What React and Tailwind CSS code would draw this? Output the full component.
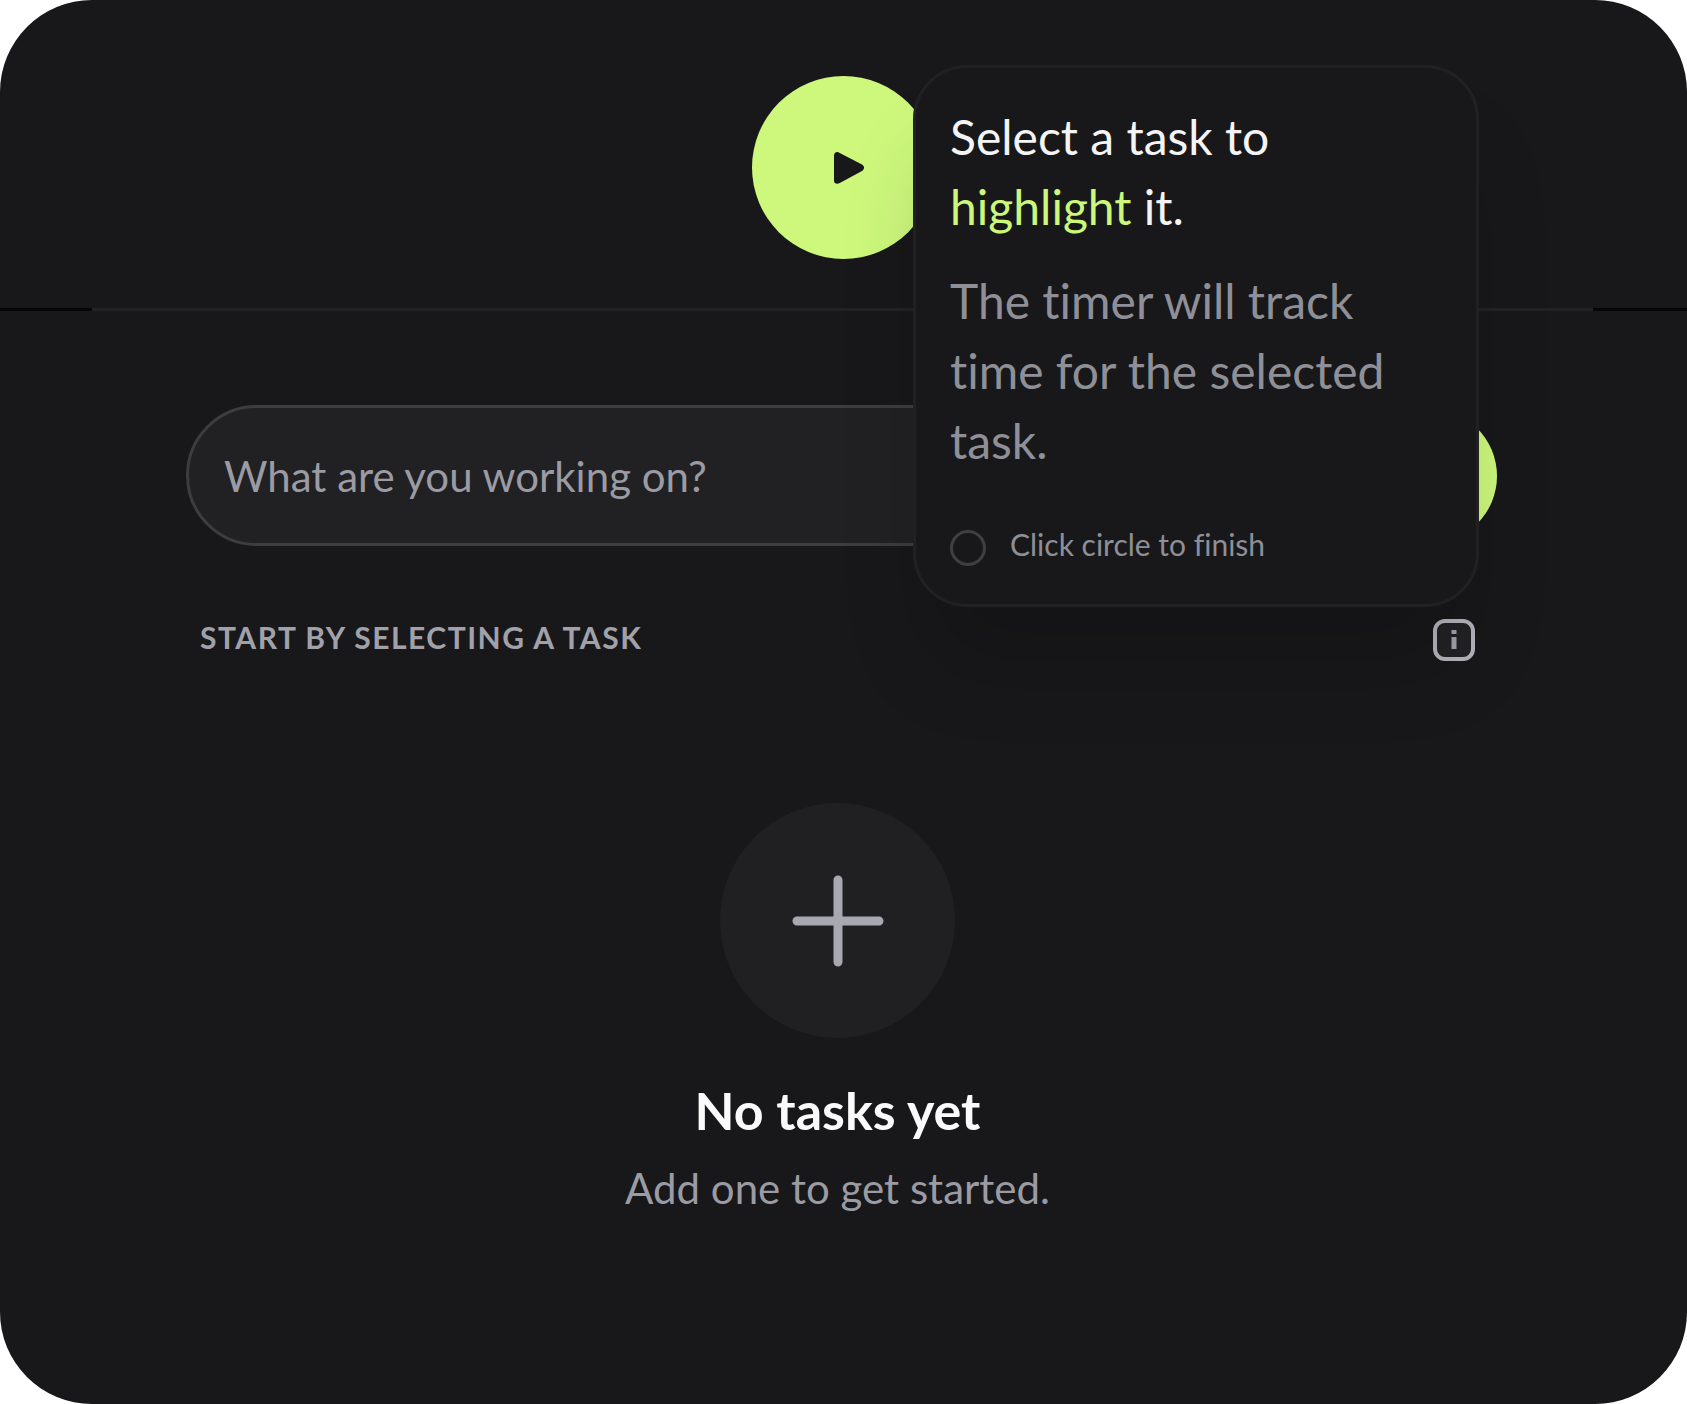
import React from 'react';

const PlayIcon = () => (
  <svg width="32" height="34" viewBox="0 0 32 34" fill="currentColor" aria-hidden="true">
    <path d="M1 4.5C1 1.8 3.4.3 5.8 1.4L29 13.6c2.7 1.5 2.7 4.9 0 6.4L6.8 32C3.6 33.6 1 32.4 1 29.4z" />
  </svg>
);

const PlusIcon = ({ size, stroke }) => (
  <svg
    width={size}
    height={size}
    viewBox="0 0 92 92"
    fill="none"
    stroke="currentColor"
    strokeWidth={stroke}
    strokeLinecap="round"
    aria-hidden="true"
  >
    <path d="M46 5v82M5 46h82" />
  </svg>
);

const InfoIcon = () => (
  <svg width="42" height="42" viewBox="0 0 42 42" fill="none" aria-hidden="true">
    <rect x="2" y="2" width="38" height="38" rx="10" fill="#222224" stroke="#b4b4bb" strokeWidth="4" />
    <path d="M21 11v4M21 18v12" stroke="#a1a1aa" strokeWidth="5" />
  </svg>
);

const TaskHint = () => (
  <div
    role="tooltip"
    className="absolute -right-1 bottom-full mb-3 w-[566px] rounded-[54px] border-3 border-[#212123] bg-[#18181a] pt-[34px] pr-16 pb-[38px] pl-[34px] text-left text-[48px] leading-[70px] shadow-[0_70px_88px_-18px_rgba(0,0,0,0.18)]"
  >
    <p className="text-[#f4f4f5]">
      Select a task to <span className="text-[#cbf77b]">highlight</span> it.
    </p>
    <p className="mt-6 text-[#8f8f98]">The timer will track time for the selected task.</p>
    <label className="mt-[54px] flex items-start gap-6 text-[30px] leading-7 text-[#8f8f98]">
      <input type="checkbox" className="size-9 appearance-none rounded-full border-3 border-[#3f3f42]" />
      Click circle to finish
    </label>
  </div>
);

const EmptyState = () => (
  <div className="mt-[142px] flex flex-col items-center">
    <div className="flex size-[235px] items-center justify-center rounded-full bg-[#202022] text-[#a8a8b1]">
      <PlusIcon size={92} stroke={9} />
    </div>
    <h2 className="mt-10 text-[52px] leading-16 font-bold text-[#fafafa]">No tasks yet</h2>
    <p className="mt-4 text-[42px] leading-15 text-[#9b9ba4]">Add one to get started.</p>
  </div>
);

export default function App() {
  return (
    <div className="min-h-screen overflow-hidden rounded-[92px] bg-[#18181a] font-['Lato',sans-serif] [font-variant-ligatures:none]">
      <header className="flex justify-center pt-[76px] pb-[49px]">
        <button
          type="button"
          aria-label="Start timer"
          className="flex size-[183px] items-center justify-center rounded-full bg-[#cdf87c] pl-2.5 text-[#18181a]"
        >
          <PlayIcon />
        </button>
      </header>

      {/* divider, darker at both ends */}
      <div className="flex h-[3px]">
        <div className="w-[92px] bg-[#060608]" />
        <div className="flex-1 bg-[#232325]" />
        <div className="w-[94px] bg-[#060608]" />
      </div>

      <main className="pt-[94px] pr-[190px] pb-20 pl-[186px]">
        <form className="flex items-center gap-6">
          <input
            type="text"
            aria-label="Task name"
            placeholder="What are you working on?"
            className="h-[141px] min-w-0 flex-1 rounded-full border-3 border-[#3d3d3f] bg-[#212123] px-[35px] text-[42px] text-white placeholder:text-[#9b9ba4]"
          />
          <button
            type="button"
            aria-label="Add task"
            className="flex size-[134px] items-center justify-center rounded-full bg-[#cdf87c] text-[#18181a]"
          >
            <PlusIcon size={48} stroke={10} />
          </button>
        </form>

        <section className="pr-[22px] pl-[14px]">
          <div className="mt-[73px] flex items-start justify-between">
            <h1 className="text-[30px] leading-9 font-bold tracking-wider text-[#a1a1aa] uppercase">
              Start by selecting a task
            </h1>
            <div className="relative">
              <button type="button" aria-label="About selecting tasks" className="block">
                <InfoIcon />
              </button>
              <TaskHint />
            </div>
          </div>
          <EmptyState />
        </section>
      </main>
    </div>
  );
}
